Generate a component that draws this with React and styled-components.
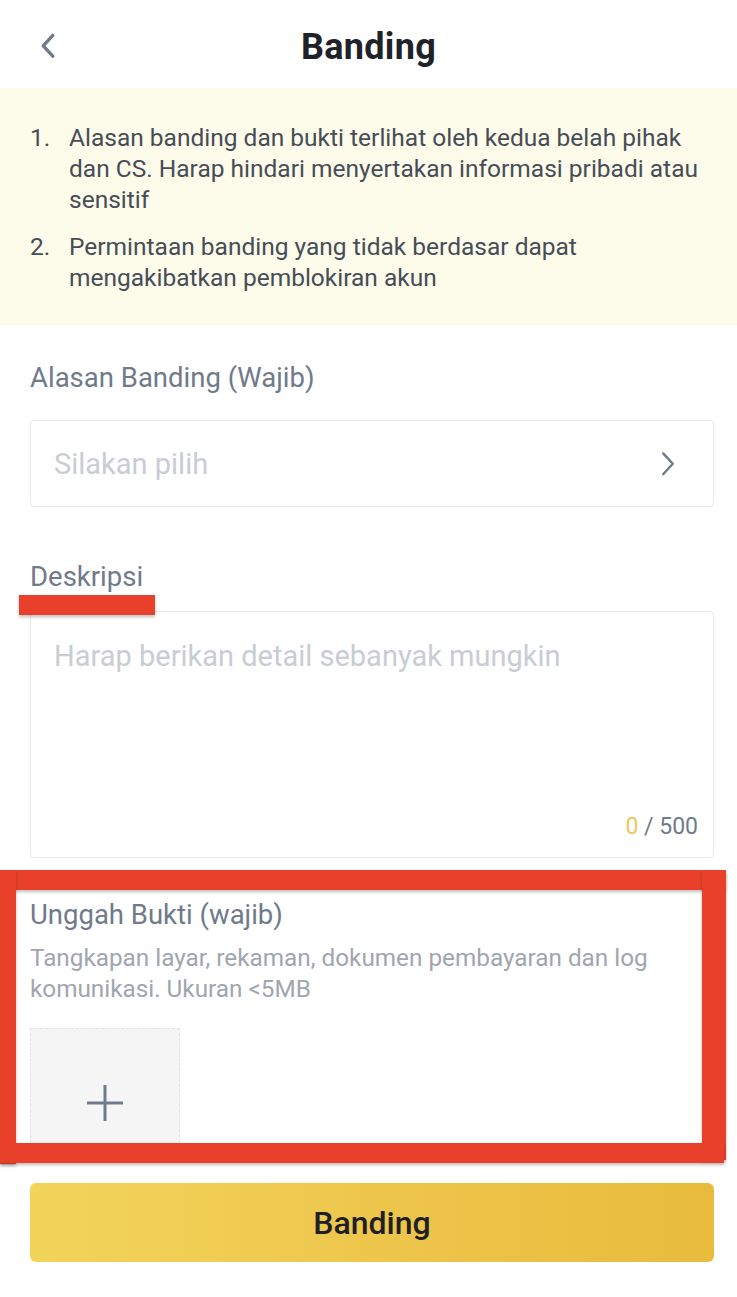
import React from "react";
import styled, { createGlobalStyle } from "styled-components";

const GlobalStyle = createGlobalStyle`
  body {
    margin: 0;
    background: #ffffff;
    font-family: Roboto, "Noto Sans", sans-serif;
  }
`;

const Page = styled.div`
  position: relative;
  width: 737px;
  height: 1297px;
  display: flex;
  flex-direction: column;
  background: #fff;
  overflow: hidden;
`;

const Content = styled.div`
  flex: 1;
  overflow: hidden;
`;

const Header = styled.div`
  height: 88px;
  display: flex;
  align-items: center;
  justify-content: center;
  position: relative;
`;

const BackButton = styled.div`
  position: absolute;
  left: 36px;
  top: 32px;
  width: 24px;
  height: 28px;
  display: flex;
  align-items: center;
  justify-content: center;
`;

const Title = styled.h1`
  margin: 0;
  font-size: 36px;
  line-height: 44px;
  font-weight: 700;
  color: #1e2329;
  padding-top: 6px;
  letter-spacing: 0.3px;
`;

const Notice = styled.ol`
  margin: 0;
  background: #fdfbe9;
  padding: 34px 30px 32px 30px;
  list-style: none;
  display: flex;
  flex-direction: column;
  gap: 16px;
`;

const NoticeItem = styled.li`
  display: flex;
  font-size: 24.5px;
  line-height: 31px;
  color: #474d57;
`;

const Num = styled.span`
  width: 39px;
  flex-shrink: 0;
`;

const Form = styled.div`
  padding: 36px 23px 0 30px;
  display: flex;
  flex-direction: column;
`;

const Label = styled.div`
  font-size: 27.5px;
  line-height: 34px;
  color: #707a8a;
  margin-bottom: ${(p) => p.gap}px;
`;

const Select = styled.div`
  height: 87px;
  box-sizing: border-box;
  border: 1px solid #e6e8ea;
  border-radius: 4px;
  display: flex;
  align-items: center;
  justify-content: space-between;
  padding: 0 37px 0 23px;
  margin-bottom: 53px;
`;

const Placeholder = styled.span`
  font-size: 29px;
  line-height: 36px;
  color: #c9cdd3;
`;

const TextArea = styled.div`
  height: 247px;
  border: 1px solid #e6e8ea;
  border-radius: 4px;
  padding: 26px 15px 16px 23px;
  box-sizing: border-box;
  display: flex;
  flex-direction: column;
  justify-content: space-between;
  margin-bottom: 40px;
`;

const Counter = styled.div`
  align-self: flex-end;
  font-size: 23px;
  line-height: 28px;
  color: #707a8a;
`;

const CountValue = styled.span`
  color: #ecc85a;
`;

const Hint = styled.div`
  font-size: 24.3px;
  line-height: 31px;
  color: #a0a6af;
  margin-bottom: 24px;
`;

const Upload = styled.div`
  width: 150px;
  height: 150px;
  flex-shrink: 0;
  box-sizing: border-box;
  border: 1px dashed #dfe1e5;
  background: #f5f5f6;
  display: flex;
  align-items: center;
  justify-content: center;
`;

const Footer = styled.div`
  padding: 20px 23px 35px 30px;
  background: #fff;
`;

const SubmitButton = styled.button`
  width: 100%;
  height: 79px;
  border: none;
  border-radius: 6px;
  background: linear-gradient(90deg, #f3d45b 0%, #eec64c 50%, #e8bb3c 100%);
  font-family: inherit;
  font-size: 32px;
  font-weight: 500;
  color: #1e2026;
`;

const Mark = styled.div`
  position: absolute;
  background: #e8402a;
  box-shadow: 0 2px 3px rgba(0, 0, 0, 0.25);
`;

const Chevron = ({ dir, color, size, weight }) => (
  <svg width={size} height={size * 1.6} viewBox="0 0 10 16" fill="none">
    <path
      d={dir === "left" ? "M8 1.5L2 8l6 6.5" : "M2 1.5L8 8l-6 6.5"}
      stroke={color}
      strokeWidth={weight}
      strokeLinecap="round"
      strokeLinejoin="round"
    />
  </svg>
);

const notes = [
  "Alasan banding dan bukti terlihat oleh kedua belah pihak dan CS. Harap hindari menyertakan informasi pribadi atau sensitif",
  "Permintaan banding yang tidak berdasar dapat mengakibatkan pemblokiran akun",
];

export default function App() {
  return (
    <Page>
      <GlobalStyle />
      <Content>
        <Header>
          <BackButton>
            <Chevron dir="left" color="#707a8a" size={16} weight={2.1} />
          </BackButton>
          <Title>Banding</Title>
        </Header>
        <Notice>
          {notes.map((n, i) => (
            <NoticeItem key={i}>
              <Num>{i + 1}.</Num>
              <span>{n}</span>
            </NoticeItem>
          ))}
        </Notice>
        <Form>
          <Label gap={25}>Alasan Banding (Wajib)</Label>
          <Select>
            <Placeholder>Silakan pilih</Placeholder>
            <Chevron dir="right" color="#707a8a" size={16} weight={1.5} />
          </Select>
          <Label gap={17}>Deskripsi</Label>
          <TextArea>
            <Placeholder>Harap berikan detail sebanyak mungkin</Placeholder>
            <Counter>
              <CountValue>0</CountValue> / 500
            </Counter>
          </TextArea>
          <Label gap={10}>Unggah Bukti (wajib)</Label>
          <Hint>
            Tangkapan layar, rekaman, dokumen pembayaran dan log komunikasi. Ukuran &lt;5MB
          </Hint>
          <Upload>
            <svg width="38" height="38" viewBox="0 0 38 38">
              <path d="M19 1v36M1 19h36" stroke="#707a8a" strokeWidth="3" />
            </svg>
          </Upload>
        </Form>
      </Content>
      <Footer>
        <SubmitButton>Banding</SubmitButton>
      </Footer>
      <Mark style={{ left: 19, top: 595, width: 136, height: 20 }} />
      <Mark style={{ left: 0, top: 870, width: 726, height: 20 }} />
      <Mark style={{ left: 0, top: 870, width: 16, height: 294 }} />
      <Mark style={{ left: 702, top: 870, width: 24, height: 290 }} />
      <Mark style={{ left: 0, top: 1143, width: 724, height: 20 }} />
    </Page>
  );
}
